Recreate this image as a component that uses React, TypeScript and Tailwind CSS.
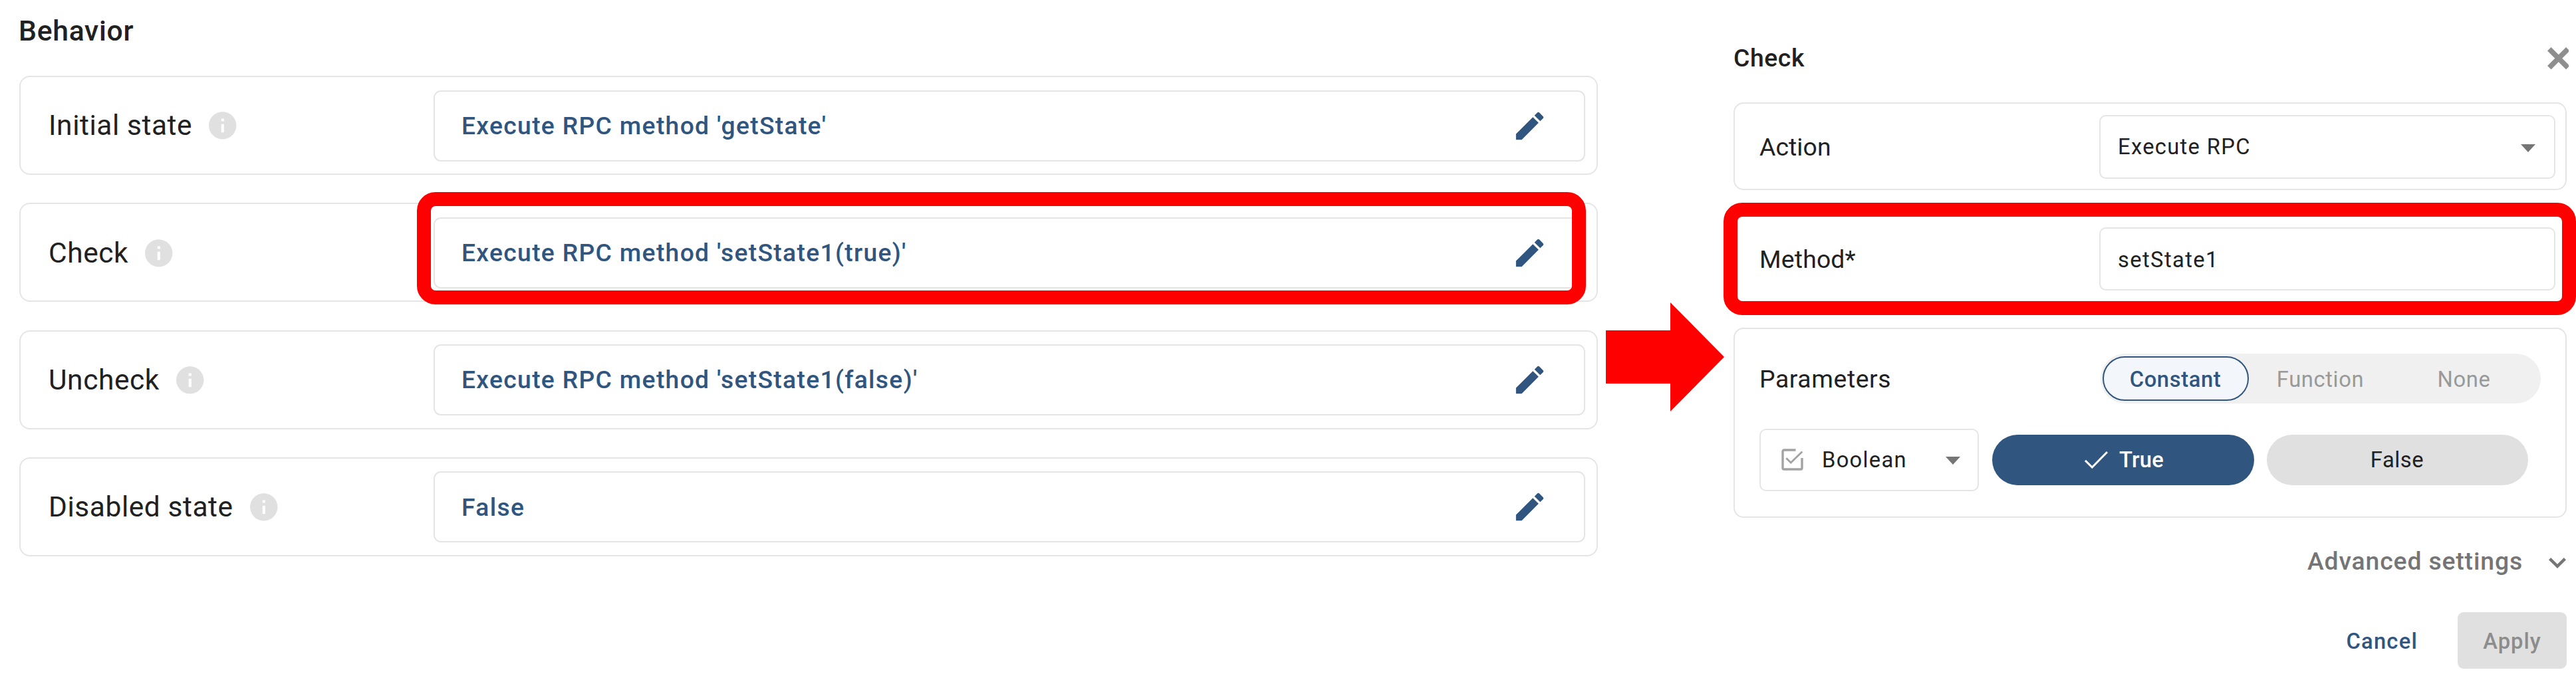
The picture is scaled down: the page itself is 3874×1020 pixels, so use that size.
import { MdEdit, MdInfo } from "react-icons/md";

const behaviors = [
  { label: "Initial state", value: "Execute RPC method 'getState'" },
  { label: "Check", value: "Execute RPC method 'setState1(true)'", highlighted: true },
  { label: "Uncheck", value: "Execute RPC method 'setState1(false)'" },
  { label: "Disabled state", value: "False" },
];

function BehaviorRow({ label, value, highlighted }: { label: string; value: string; highlighted?: boolean }) {
  return (
    <div className="relative flex h-[149px] items-center rounded-[16px] border-2 border-[#e5e5e5] pt-px pr-[17px] pl-[42px]">
      <div className="flex w-[579px] shrink-0 items-center gap-[21px] text-[42.5px] leading-none tracking-[0.55px] text-[#212121]">
        <span className="pt-px">{label}</span>
        <MdInfo className="size-[49.6px] text-[#e0e0e0]" />
      </div>
      <button className="flex h-[107px] flex-1 items-center justify-between rounded-[11px] border-2 border-[#e5e5e5] pr-[54px] pl-[40px] text-[37.3px] leading-none font-medium tracking-[1.3px] text-[#305680]">
        <span className="pt-px">{value}</span>
        <MdEdit className="size-[55px]" />
      </button>
      {highlighted && (
        <div className="absolute top-[-18px] left-[596px] h-[169px] w-[1758px] rounded-[28px] border-[21px] border-[#ff0000]" />
      )}
    </div>
  );
}

function Caret() {
  return (
    <svg viewBox="0 0 22 12" className="mt-[3px] h-[12px] w-[22px] fill-[#757575]">
      <path d="M0 0h22L11 12z" />
    </svg>
  );
}

function ActionSettings() {
  return (
    <section className="ml-[14px] w-[1253px] text-[37.3px] leading-none text-[#212121]">
      <header className="mt-[57px] mr-[-3px] mb-[37px] flex h-[60px] items-center justify-between">
        <h2 className="pt-[2px] font-medium tracking-[0.6px]">Check</h2>
        <svg viewBox="0 0 32 33.4" className="mt-[2px] h-[33.4px] w-[32px] overflow-hidden stroke-[#8e8e8e]" strokeWidth="7.8">
          <path d="M2.8 2.8l28 28M30.8 2.8l-28 28" />
        </svg>
      </header>
      <div className="flex flex-col gap-[37.3px]">
        <div className="flex h-[132px] items-center rounded-[15px] border-2 border-[#e5e5e5] pt-[2px] pr-[15px] pl-[37px]">
          <span className="w-[511px] pt-px tracking-[0.1px]">Action</span>
          <div className="flex h-[96px] flex-1 items-center justify-between rounded-[10px] border-2 border-[#e5e5e5] pr-[28px] pl-[26px] text-[32.7px] tracking-[1.33px]">
            <span className="pt-px">Execute RPC</span>
            <Caret />
          </div>
        </div>
        <div className="relative flex h-[132px] items-center rounded-[15px] border-2 border-[#e5e5e5] pt-[1px] pr-[15px] pl-[37px]">
          <span className="w-[511px] pt-px tracking-[0.2px]">Method*</span>
          <div className="flex h-[95px] flex-1 items-center rounded-[10px] border-2 border-[#e5e5e5] pt-[3px] pl-[26px] text-[32.7px] tracking-[1.4px]">
            setState1
          </div>
          <div className="absolute top-[-20px] left-[-17px] h-[169px] w-[1282px] rounded-[28px] border-[21px] border-[#ff0000]" />
        </div>
        <div className="flex h-[286.5px] flex-col gap-[38px] rounded-[15px] border-2 border-[#e5e5e5] pt-[37px] pl-[37px]">
          <div className="flex items-center">
            <span className="w-[512.5px] pt-[4px] tracking-[0.6px]">Parameters</span>
            <div className="flex h-[75px] w-[662px] rounded-full bg-[#f0f0f0] py-[4px] pr-[7px] pl-[3px] text-[32.7px] tracking-[0.65px] text-[#999999]">
              <div className="flex flex-1 items-center justify-center rounded-full border-2 border-[#305680] bg-[#f3f6fb] pt-[4px] font-medium text-[#305680]">
                Constant
              </div>
              <div className="flex flex-1 items-center justify-center pt-[4px]">Function</div>
              <div className="flex flex-1 items-center justify-center pt-[4px]">None</div>
            </div>
          </div>
          <div className="flex items-center text-[32.7px]">
            <div className="flex h-[94.5px] w-[330px] items-center rounded-[10px] border-2 border-[#e5e5e5] pr-[26px] pl-[31px] tracking-[1.3px]">
              <svg viewBox="0 0 33 33" className="mr-[28px] size-[33px] fill-none stroke-[#a3a3a3]" strokeWidth="3.4">
                <path d="M21.5 2H4a2 2 0 0 0-2 2v25a2 2 0 0 0 2 2h25a2 2 0 0 0 2-2V14" />
                <path d="M7.3 14.2l6.9 6.9L31.3 4.4" strokeWidth="2.8" />
              </svg>
              <span className="flex-1 pt-[2px]">Boolean</span>
              <Caret />
            </div>
            <button className="ml-[19.5px] flex h-[76px] w-[394px] items-center justify-center gap-[17px] rounded-full bg-[#305680] pl-[4px] font-medium tracking-[0.3px] text-white">
              <svg viewBox="0 0 35 26" className="h-[26px] w-[35px] fill-none stroke-white" strokeWidth="3">
                <path d="M1 13.8l10.3 10.2L34 1" />
              </svg>
              <span className="pt-[2px]">True</span>
            </button>
            <button className="ml-[19px] h-[76px] w-[393px] rounded-full bg-[#e0e0e0] pt-[2px] tracking-[0.6px]">False</button>
          </div>
        </div>
      </div>
      <div className="mt-[36px] flex h-[60px] items-center justify-end gap-[39px] pr-px font-medium tracking-[0.87px] text-[#757575]">
        Advanced settings
        <svg viewBox="0 0 26 16" className="mt-[3px] h-[16px] w-[26px] fill-none stroke-[#757575]" strokeWidth="4.4">
          <path d="M1.6 1.6L13 12.9 24.4 1.6" />
        </svg>
      </div>
      <div className="mt-[46px] flex items-center justify-end gap-[60px] text-[32.7px] font-medium">
        <button className="pt-[3px] tracking-[1.25px] text-[#305680]">Cancel</button>
        <button className="h-[85px] w-[164px] rounded-[9px] bg-[#e0e0e0] pt-[3px] tracking-[1px] text-[#8c8c8c]">Apply</button>
      </div>
    </section>
  );
}

export default function App() {
  return (
    <main className="flex h-[1020px] w-[3874px] items-start overflow-hidden bg-white pl-[29px] font-['Roboto',sans-serif]">
      <section className="w-[2374px]">
        <h1 className="mb-[22px] ml-[-1px] h-[92px] text-[42.7px] leading-[92px] font-medium tracking-[0.7px] text-[#212121]">Behavior</h1>
        <div className="flex flex-col gap-[42.3px]">
          {behaviors.map((b) => (
            <BehaviorRow key={b.label} {...b} />
          ))}
        </div>
      </section>
      <svg viewBox="0 0 178 164" className="mt-[455px] ml-[12px] h-[164px] w-[178px] shrink-0 fill-[#ff0000]">
        <path d="M0 42h97V0l81 82-81 82v-42H0z" />
      </svg>
      <ActionSettings />
    </main>
  );
}
